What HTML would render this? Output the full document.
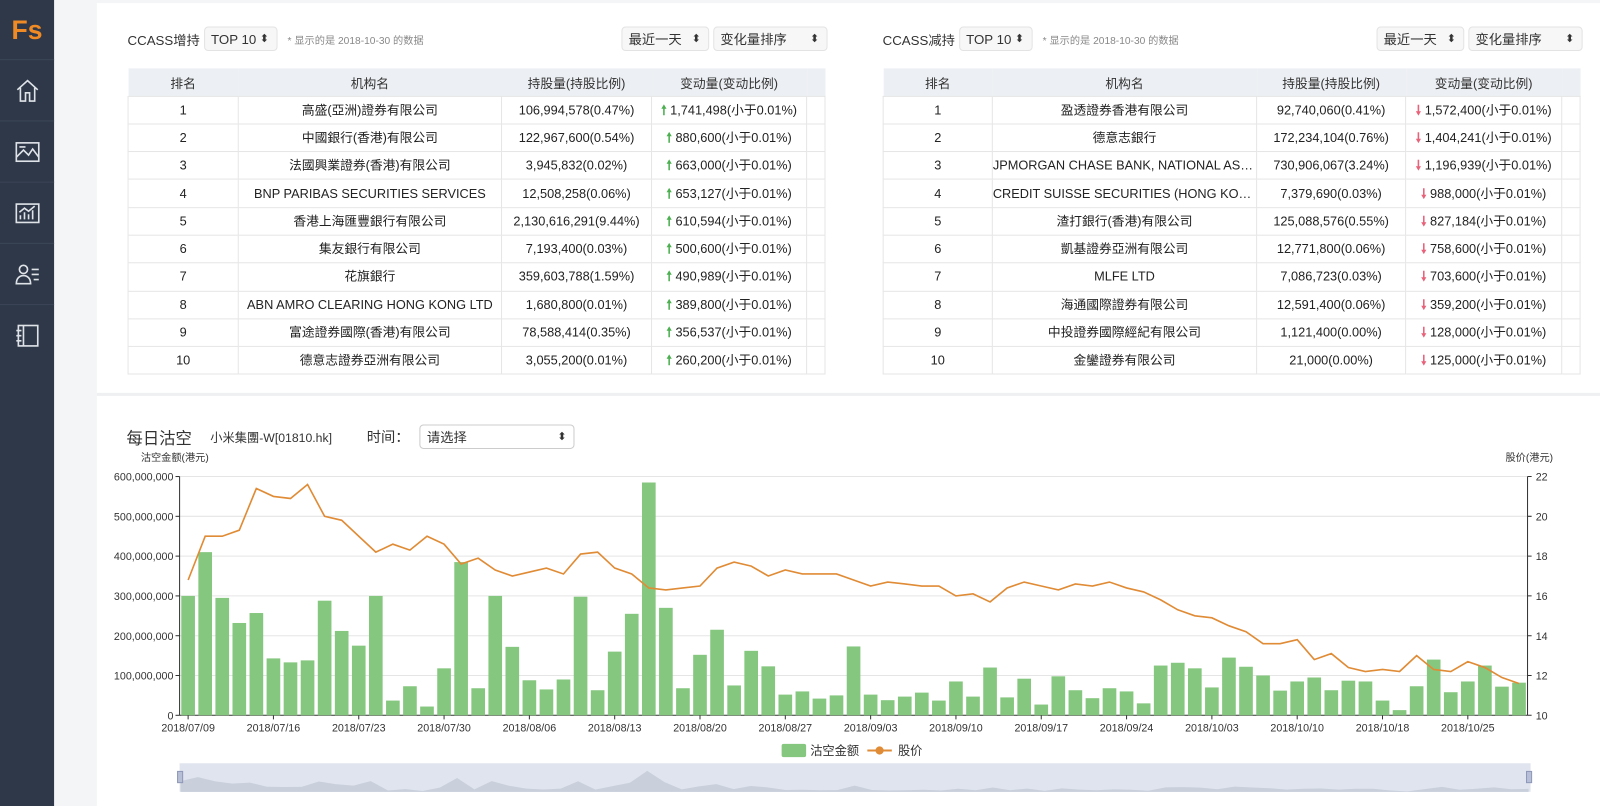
<!DOCTYPE html>
<html><head><meta charset="utf-8">
<style>
*{box-sizing:border-box;margin:0;padding:0}
body{width:1600px;height:806px;overflow:hidden;background:#f4f5f7;font-family:"Liberation Sans","Noto Sans CJK SC",sans-serif;color:#333;position:relative}
#wrap{position:absolute;left:0;top:0;width:1568px;height:790px;transform:scale(1.0204);transform-origin:0 0}
.side{position:absolute;left:0;top:0;width:53px;height:790px;background:#2e3848}
.side .logo{position:absolute;left:0;top:14px;width:53px;text-align:center;color:#f08a24;font-weight:bold;font-size:26px}
.side .it{position:absolute;left:0;width:53px;height:58px;border-top:1px solid #3b4657}
.side svg{position:absolute;left:14px;top:17px}
.main{position:absolute;left:95px;top:3px;width:1473px;height:787px;background:#fff}
.topsep{position:absolute;left:95px;top:385px;width:1473px;height:3px;background:#eef0f2}
.hd{position:absolute;font-size:13px;color:#333;display:flex;align-items:center;white-space:nowrap}
.sel{display:inline-block;border:1px solid #e3e3e3;border-radius:4px;background:#f7f7f7;padding:3px 6px;font-size:13px;margin-left:4px;position:relative;white-space:nowrap;height:24px;line-height:17px}
.sel i{position:absolute;right:7px;top:3px;font-style:normal;font-size:11px}
.note{font-size:10px;color:#888;margin-left:10px}
table{position:absolute;border-collapse:collapse;font-size:12.5px;table-layout:fixed}
th{background:#eceff3;height:27px;font-weight:normal;color:#333;text-align:center}
td{height:27.3px;line-height:14px;text-align:center;border:1px solid #e6e6e6;color:#222;white-space:nowrap;overflow:hidden;text-overflow:ellipsis}
.up{color:#4caf50;font-weight:bold}
.dn{color:#e8627a;font-weight:bold}
</style></head><body>
<div id="wrap">
<div class="side">
<div class="logo">Fs</div>
<div class="it" style="top:58px"><svg width="26" height="26" viewBox="0 0 26 26" fill="none" stroke="#dfe3e8" stroke-width="1.6"><path d="M3 12L13 3l10 9M6 10v13h5v-8h4v8h5V10"/></svg></div>
<div class="it" style="top:118px"><svg width="26" height="26" viewBox="0 0 26 26" fill="none" stroke="#dfe3e8" stroke-width="1.6"><rect x="2" y="4" width="22" height="18"/><path d="M2 18l7-7 5 5 4-6 6 8M5 8h6"/></svg></div>
<div class="it" style="top:178px"><svg width="26" height="26" viewBox="0 0 26 26" fill="none" stroke="#dfe3e8" stroke-width="1.6"><rect x="2" y="4" width="22" height="18"/><path d="M6 19v-4M10 19v-7M14 19v-5M18 19v-9M5 12l5-4 4 3 6-5"/></svg></div>
<div class="it" style="top:238px"><svg width="26" height="26" viewBox="0 0 26 26" fill="none" stroke="#dfe3e8" stroke-width="1.6"><circle cx="9" cy="8" r="4"/><path d="M2 22c0-5 3-8 7-8s7 3 7 8zM17 8h7M17 13h7M19 18h5"/></svg></div>
<div class="it" style="top:298px"><svg width="26" height="26" viewBox="0 0 26 26" fill="none" stroke="#dfe3e8" stroke-width="1.6"><rect x="4" y="3" width="19" height="20"/><path d="M9 3v20M2 8h5M2 13h5M2 18h5"/></svg></div>
</div>
<div class="main"></div>
<div class="topsep"></div>

<div class="hd" style="left:125px;top:26px">CCASS增持 <span class="sel" style="width:72px">TOP 10<i>⬍</i></span><span class="note">* 显示的是 2018-10-30 的数据</span></div>
<div class="hd" style="left:605px;top:26px"><span class="sel" style="width:86px">最近一天<i>⬍</i></span><span class="sel" style="width:112px">变化量排序<i>⬍</i></span></div>
<div class="hd" style="left:865px;top:26px">CCASS减持 <span class="sel" style="width:72px">TOP 10<i>⬍</i></span><span class="note">* 显示的是 2018-10-30 的数据</span></div>
<div class="hd" style="left:1345px;top:26px"><span class="sel" style="width:86px">最近一天<i>⬍</i></span><span class="sel" style="width:112px">变化量排序<i>⬍</i></span></div>

<table style="left:125px;top:67px;width:683px">
<colgroup><col style="width:108px"><col style="width:258px"><col style="width:147px"><col style="width:152px"><col style="width:18px"></colgroup>
<tr><th>排名</th><th>机构名</th><th>持股量(持股比例)</th><th>变动量(变动比例)</th><th></th></tr>
<tr><td>1</td><td>高盛(亞洲)證券有限公司</td><td>106,994,578(0.47%)</td><td><span class="up">🠕</span> 1,741,498(小于0.01%)</td><td></td></tr>
<tr><td>2</td><td>中國銀行(香港)有限公司</td><td>122,967,600(0.54%)</td><td><span class="up">🠕</span> 880,600(小于0.01%)</td><td></td></tr>
<tr><td>3</td><td>法國興業證券(香港)有限公司</td><td>3,945,832(0.02%)</td><td><span class="up">🠕</span> 663,000(小于0.01%)</td><td></td></tr>
<tr><td>4</td><td>BNP PARIBAS SECURITIES SERVICES</td><td>12,508,258(0.06%)</td><td><span class="up">🠕</span> 653,127(小于0.01%)</td><td></td></tr>
<tr><td>5</td><td>香港上海匯豐銀行有限公司</td><td>2,130,616,291(9.44%)</td><td><span class="up">🠕</span> 610,594(小于0.01%)</td><td></td></tr>
<tr><td>6</td><td>集友銀行有限公司</td><td>7,193,400(0.03%)</td><td><span class="up">🠕</span> 500,600(小于0.01%)</td><td></td></tr>
<tr><td>7</td><td>花旗銀行</td><td>359,603,788(1.59%)</td><td><span class="up">🠕</span> 490,989(小于0.01%)</td><td></td></tr>
<tr><td>8</td><td>ABN AMRO CLEARING HONG KONG LTD</td><td>1,680,800(0.01%)</td><td><span class="up">🠕</span> 389,800(小于0.01%)</td><td></td></tr>
<tr><td>9</td><td>富途證券國際(香港)有限公司</td><td>78,588,414(0.35%)</td><td><span class="up">🠕</span> 356,537(小于0.01%)</td><td></td></tr>
<tr><td>10</td><td>德意志證券亞洲有限公司</td><td>3,055,200(0.01%)</td><td><span class="up">🠕</span> 260,200(小于0.01%)</td><td></td></tr>
</table>

<table style="left:865px;top:67px;width:683px">
<colgroup><col style="width:107px"><col style="width:259px"><col style="width:146px"><col style="width:153px"><col style="width:18px"></colgroup>
<tr><th>排名</th><th>机构名</th><th>持股量(持股比例)</th><th>变动量(变动比例)</th><th></th></tr>
<tr><td>1</td><td>盈透證券香港有限公司</td><td>92,740,060(0.41%)</td><td><span class="dn">🠗</span> 1,572,400(小于0.01%)</td><td></td></tr>
<tr><td>2</td><td>德意志銀行</td><td>172,234,104(0.76%)</td><td><span class="dn">🠗</span> 1,404,241(小于0.01%)</td><td></td></tr>
<tr><td>3</td><td>JPMORGAN CHASE BANK, NATIONAL ASSOCIATION</td><td>730,906,067(3.24%)</td><td><span class="dn">🠗</span> 1,196,939(小于0.01%)</td><td></td></tr>
<tr><td>4</td><td>CREDIT SUISSE SECURITIES (HONG KONG) LTD</td><td>7,379,690(0.03%)</td><td><span class="dn">🠗</span> 988,000(小于0.01%)</td><td></td></tr>
<tr><td>5</td><td>渣打銀行(香港)有限公司</td><td>125,088,576(0.55%)</td><td><span class="dn">🠗</span> 827,184(小于0.01%)</td><td></td></tr>
<tr><td>6</td><td>凱基證券亞洲有限公司</td><td>12,771,800(0.06%)</td><td><span class="dn">🠗</span> 758,600(小于0.01%)</td><td></td></tr>
<tr><td>7</td><td>MLFE LTD</td><td>7,086,723(0.03%)</td><td><span class="dn">🠗</span> 703,600(小于0.01%)</td><td></td></tr>
<tr><td>8</td><td>海通國際證券有限公司</td><td>12,591,400(0.06%)</td><td><span class="dn">🠗</span> 359,200(小于0.01%)</td><td></td></tr>
<tr><td>9</td><td>中投證券國際經紀有限公司</td><td>1,121,400(0.00%)</td><td><span class="dn">🠗</span> 128,000(小于0.01%)</td><td></td></tr>
<tr><td>10</td><td>金鑾證券有限公司</td><td>21,000(0.00%)</td><td><span class="dn">🠗</span> 125,000(小于0.01%)</td><td></td></tr>
</table>

<div class="hd" style="left:124px;top:416px"><span style="font-size:16px">每日沽空</span><span style="font-size:12px;margin-left:18px">小米集團-W[01810.hk]</span><span style="font-size:14px;margin-left:34px">时间：</span>
<span class="sel" style="width:152px;margin-left:10px;background:#fff;border-color:#ccc">请选择<i>⬍</i></span></div>

<svg id="ch" width="1568" height="790" style="position:absolute;left:0;top:0" font-family="Liberation Sans, Noto Sans CJK SC, sans-serif"></svg>
</div>
<script>
var s=document.getElementById('ch'),h='';
var L=176,R=1497,T=467,B=701;
h+='<text x="138" y="452" font-size="10" fill="#333">沽空金额(港元)</text><text x="1522" y="452" font-size="10" fill="#333" text-anchor="end">股价(港元)</text>';
var yl=['0','100,000,000','200,000,000','300,000,000','400,000,000','500,000,000','600,000,000'];
for(var i=0;i<=6;i++){var y=B-i*39;h+='<line x1="'+L+'" x2="'+R+'" y1="'+y+'" y2="'+y+'" stroke="'+(i?'#e5e5e5':'#333')+'"/>';
h+='<line x1="'+(L-4)+'" x2="'+L+'" y1="'+y+'" y2="'+y+'" stroke="#333"/><line x1="'+R+'" x2="'+(R+4)+'" y1="'+y+'" y2="'+y+'" stroke="#333"/>';
h+='<text x="'+(L-6)+'" y="'+(y+4)+'" font-size="10.5" fill="#333" text-anchor="end">'+yl[i]+'</text>';
h+='<text x="'+(R+8)+'" y="'+(y+4)+'" font-size="10.5" fill="#333">'+(10+2*i)+'</text>';}
h+='<line x1="'+L+'" x2="'+L+'" y1="'+T+'" y2="'+B+'" stroke="#333"/><line x1="'+R+'" x2="'+R+'" y1="'+T+'" y2="'+B+'" stroke="#333"/>';
var b=[300,410,295,232,257,143,133,138,288,212,175,300,37,73,22,118,385,68,300,172,88,65,90,298,63,160,255,585,270,68,152,215,75,162,123,52,60,42,50,173,52,38,47,57,37,85,47,120,45,92,27,98,63,43,68,60,30,125,132,118,70,145,122,100,62,85,95,63,87,85,37,13,73,140,58,85,125,72,82];
var p=[16.8,19,19,19.3,21.4,21,20.9,21.6,20,19.8,19,18.2,18.6,18.3,19,18.6,17.6,17.9,17.3,17,17.2,17.4,17.1,18.1,18.2,17.4,17.1,16.4,16.3,16.4,16.5,17.4,17.7,17.5,17,17.3,17.1,17.1,17.1,16.8,16.5,16.7,16.6,16.5,16.5,16,16.1,15.7,16.4,16.7,16.5,16.3,16.6,16.5,16.7,16.4,16.2,15.8,15.3,15,14.9,14.5,14.2,13.6,13.6,13.8,12.8,13.1,12.4,12.2,12.3,12.2,13,12.3,12.2,12.7,12.4,11.9,11.6];
var n=b.length,w=(R-L)/n,pts=[],mp=[];
for(i=0;i<n;i++){var x=L+w*i+w/2,bh=b[i]*0.39;h+='<rect x="'+(x-w*0.4)+'" y="'+(B-bh)+'" width="'+(w*0.8)+'" height="'+bh+'" fill="#85c77f"/>';
pts.push(x.toFixed(1)+','+(B-(p[i]-10)*19.5).toFixed(1));
var mx=177+(1498-177)*i/(n-1);mp.push(mx.toFixed(1)+','+(776-b[i]*0.035).toFixed(1));}
h+='<polyline points="'+pts.join(' ')+'" fill="none" stroke="#e08b35" stroke-width="1.6"/>';
var dl=['2018/07/09','2018/07/16','2018/07/23','2018/07/30','2018/08/06','2018/08/13','2018/08/20','2018/08/27','2018/09/03','2018/09/10','2018/09/17','2018/09/24','2018/10/03','2018/10/10','2018/10/18','2018/10/25'];
for(i=0;i<dl.length;i++){var x=L+w*5*i+w/2;h+='<line x1="'+x+'" x2="'+x+'" y1="'+B+'" y2="'+(B+4)+'" stroke="#333"/><text x="'+x+'" y="'+(B+16)+'" font-size="10.5" fill="#333" text-anchor="middle">'+dl[i]+'</text>';}
h+='<rect x="766" y="729" width="24" height="13" rx="2" fill="#85c77f"/><text x="794" y="740" font-size="12" fill="#333">沽空金额</text>';
h+='<line x1="850" x2="874" y1="735.5" y2="735.5" stroke="#e08b35" stroke-width="2"/><circle cx="862" cy="735.5" r="4" fill="#e08b35"/><text x="880" y="740" font-size="12" fill="#333">股价</text>';
h+='<rect x="176" y="748" width="1324" height="28" fill="#dfe4ee"/><polygon points="177,776 '+mp.join(' ')+' 1498,776" fill="#c9cfdb"/>';
h+='<rect x="174" y="756" width="5" height="11" fill="#b7bfd6" stroke="#8e98b8"/><rect x="1496" y="756" width="5" height="11" fill="#b7bfd6" stroke="#8e98b8"/>';
s.innerHTML=h;
</script>
</body></html>
